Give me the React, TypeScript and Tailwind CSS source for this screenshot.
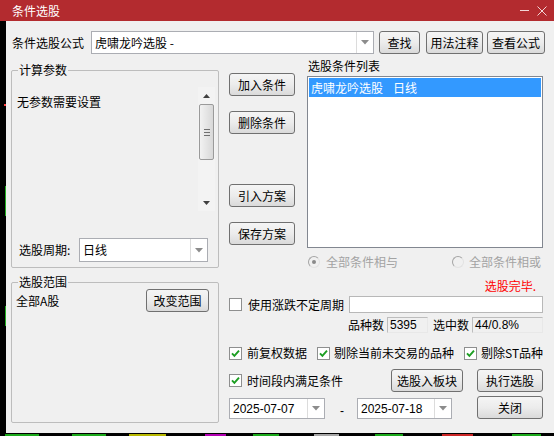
import type { ReactNode } from 'react';

// 下拉小三角
function Arrow() {
  return (
    <svg width="8" height="5" viewBox="0 0 8 5">
      <path d="M0 0 H8 L4 4.5 Z" fill="#8c8c8c" />
    </svg>
  );
}

function Btn({ className, children }: { className: string; children: ReactNode }) {
  return (
    <div
      className={`flex items-center justify-center shrink-0 whitespace-nowrap border border-[#707070] rounded-[3px] bg-linear-to-b from-[#f5f5f5] via-[#ececec] to-[#dadada] text-[12px] leading-none text-black ${className}`}
    >
      {children}
    </div>
  );
}

function Combo({ className, text, mono }: { className: string; text: string; mono?: boolean }) {
  return (
    <div className={`flex shrink-0 border border-[#abadb3] bg-white ${className}`}>
      <div
        className={`flex-1 flex items-center pl-[3px] text-black whitespace-pre ${
          mono ? "font-['Liberation_Sans',sans-serif] text-[12px]" : 'text-[12px]'
        }`}
      >
        {text}
      </div>
      <div className="w-[17px] border-l border-[#dcdcdc] flex items-center justify-center">
        <Arrow />
      </div>
    </div>
  );
}

function Check({ checked }: { checked?: boolean }) {
  return (
    <div className="w-[13px] h-[13px] shrink-0 border border-[#8e8f8f] bg-white flex items-center justify-center">
      {checked && (
        <svg width="9" height="9" viewBox="0 0 9 9">
          <path d="M1 4.3 L3.4 6.8 L8 1.6" stroke="#1c9e22" strokeWidth="1.9" fill="none" />
        </svg>
      )}
    </div>
  );
}

function Radio({ on }: { on?: boolean }) {
  return (
    <div className="w-[12px] h-[12px] shrink-0 rounded-full border border-[#a4a4a4] border-r-[#e2e2e2] border-b-[#e2e2e2] bg-[#f0f0f0] flex items-center justify-center">
      {on && <div className="w-[4px] h-[4px] rounded-full bg-[#8a8a8a]" />}
    </div>
  );
}

function Scrollbar() {
  return (
    <div className="w-[17px] h-[124px] mr-[3px] flex flex-col bg-[#f3f3f3]">
      <div className="h-[17px] flex items-center justify-center">
        <svg width="7" height="4" viewBox="0 0 7 4">
          <path d="M0 4 H7 L3.5 0 Z" fill="#404040" />
        </svg>
      </div>
      <div className="h-[56px] mx-[1px] rounded-[2px] border border-[#9a9a9a] bg-linear-to-r from-[#f2f2f2] to-[#d8d8d8] flex flex-col items-center justify-center gap-[2px]">
        <div className="w-[6px] h-px bg-[#707070]" />
        <div className="w-[6px] h-px bg-[#707070]" />
        <div className="w-[6px] h-px bg-[#707070]" />
      </div>
      <div className="flex-1" />
      <div className="h-[17px] flex items-center justify-center">
        <svg width="7" height="4" viewBox="0 0 7 4">
          <path d="M0 0 H7 L3.5 4 Z" fill="#404040" />
        </svg>
      </div>
    </div>
  );
}

const marks = [
  { w: 'w-[34px]', c: 'bg-[#22d322]', ml: 'ml-[5px]' },
  { w: 'w-[34px]', c: 'bg-[#22d322]', ml: 'ml-[33px]' },
  { w: 'w-[37px]', c: 'bg-[#e6e600]', ml: 'ml-[23px]' },
  { w: 'w-[21px]', c: 'bg-[#e000e0]', ml: 'ml-[39px]' },
  { w: 'w-[26px]', c: 'bg-[#22d322]', ml: 'ml-[27px]' },
  { w: 'w-[25px]', c: 'bg-[#d0d0d0]', ml: 'ml-[35px]' },
  { w: 'w-[28px]', c: 'bg-[#22d322]', ml: 'ml-[36px]' },
  { w: 'w-[31px]', c: 'bg-[#ff3030]', ml: 'ml-[39px]' },
  { w: 'w-[29px]', c: 'bg-[#22d322]', ml: 'ml-[39px]' },
];

export default function App() {
  return (
    <div className="w-[554px] h-[436px] bg-black flex flex-col overflow-hidden font-['Noto_Sans_CJK_SC',sans-serif] text-[12px] text-black select-none">
      {/* 标题栏 */}
      <div className="h-[21px] shrink-0 bg-[#b32b2f] flex items-center pl-[12px] pr-[7px]">
        <span className="text-white text-[12px] leading-none">条件选股</span>
        <div className="ml-auto flex items-center gap-[8px]">
          <svg width="9" height="2" viewBox="0 0 9 2">
            <rect width="9" height="1" fill="#f2d6d6" />
          </svg>
          <svg width="10" height="10" viewBox="0 0 10 10">
            <path d="M0.5 0.5 L9.5 9.5 M9.5 0.5 L0.5 9.5" stroke="#f2d6d6" strokeWidth="1" />
          </svg>
        </div>
      </div>

      <div className="h-[412px] shrink-0 flex">
        {/* 左侧黑边 */}
        <div className="w-[6px] shrink-0 flex flex-col">
          <div className="mt-[83px] ml-[4px] w-[2px] h-[2px] bg-[#ff4040]" />
          <div className="mt-[80px] ml-[5px] w-px h-[30px] bg-[#22b022]" />
          <div className="mt-[90px] ml-[5px] w-px h-[20px] bg-[#22b022]" />
        </div>

        {/* 窗体 */}
        <div className="flex-1 bg-[#f0f0f0] flex flex-col">
          {/* 公式行 */}
          <div className="mt-[10px] ml-[6px] h-[23px] flex items-center">
            <span className="w-[79px] shrink-0 leading-none whitespace-nowrap">条件选股公式</span>
            <Combo className="w-[283px] h-[23px]" text="虎啸龙吟选股 -" />
            <Btn className="ml-[5px] w-[41px] h-[23px]">查找</Btn>
            <Btn className="ml-[6px] w-[57px] h-[23px]">用法注释</Btn>
            <Btn className="ml-[4px] w-[58px] h-[23px]">查看公式</Btn>
          </div>

          <div className="mt-[8px] ml-[5px] flex">
            {/* 左列 */}
            <div className="w-[208px] shrink-0 flex flex-col">
              <fieldset className="h-[206px] border border-[#bdbdbd] rounded-[2px]">
                <legend className="ml-[6px] px-[1px] leading-[16px]">计算参数</legend>
                <div className="mt-[9px] h-[124px] flex">
                  <div className="flex-1 pl-[5px] pt-[7px] leading-[16px]">无参数需要设置</div>
                  <Scrollbar />
                </div>
                <div className="mt-[27px] pl-[7px] h-[24px] flex items-center">
                  <span className="w-[60px] shrink-0 leading-none whitespace-nowrap">选股周期:</span>
                  <Combo className="w-[129px] h-[24px]" text="日线" />
                </div>
              </fieldset>

              <fieldset className="mt-[6px] h-[149px] border border-[#bdbdbd] rounded-[2px]">
                <legend className="ml-[6px] px-[1px] leading-[16px]">选股范围</legend>
                <div className="-mt-[1px] h-[23px] pl-[4px] pr-[9px] flex items-center justify-between">
                  <span className="leading-none">全部A股</span>
                  <Btn className="w-[63px] h-[23px]">改变范围</Btn>
                </div>
              </fieldset>
            </div>

            {/* 右侧 */}
            <div className="ml-[10px] w-[314px] flex flex-col">
              <div className="h-[186px] flex">
                <div className="w-[66px] shrink-0 pt-[11px] flex flex-col">
                  <Btn className="w-[66px] h-[23px]">加入条件</Btn>
                  <Btn className="mt-[15px] w-[66px] h-[23px]">删除条件</Btn>
                  <Btn className="mt-[50px] w-[66px] h-[23px]">引入方案</Btn>
                  <Btn className="mt-[15px] w-[66px] h-[23px]">保存方案</Btn>
                </div>
                <div className="ml-[12px] w-[236px] flex flex-col">
                  <div className="-mt-[4px] pl-[1px] leading-[16px]">选股条件列表</div>
                  <div className="mt-[2px] h-[172px] border border-[#828790] bg-white p-px">
                    <div className="h-[19px] bg-[#3399ff] text-white pl-[2px] flex items-center leading-none">
                      <span>虎啸龙吟选股</span>
                      <span className="ml-[10px]">日线</span>
                    </div>
                  </div>
                </div>
              </div>

              <div className="mt-[6px] h-[16px] pl-[79px] flex items-center text-[#a3a3a3] whitespace-nowrap">
                <Radio on />
                <span className="ml-[6px] leading-none">全部条件相与</span>
                <div className="ml-[54px]">
                  <Radio />
                </div>
                <span className="ml-[5px] leading-none">全部条件相或</span>
              </div>

              <div className="mt-[8px] pr-[7px] leading-[16px] text-right text-[#ff0000]">选股完毕.</div>

              <div className="mt-[2px] h-[17px] flex items-center whitespace-nowrap">
                <Check />
                <span className="ml-[6px] leading-none">使用涨跌不定周期</span>
                <div className="ml-[5px] w-[194px] h-[17px] shrink-0 border border-[#b8b8b8] bg-white" />
              </div>

              <div className="mt-[4px] h-[16px] pl-[119px] flex items-center whitespace-nowrap">
                <span className="w-[39px] shrink-0 leading-none">品种数</span>
                <div className="w-[41px] h-[16px] shrink-0 border border-[#bdbdbd] border-r-[#e8e8e8] border-b-[#e8e8e8] pl-[2px] flex items-center font-['Liberation_Sans',sans-serif] text-[12px]">
                  5395
                </div>
                <span className="ml-[5px] w-[39px] shrink-0 leading-none">选中数</span>
                <div className="w-[71px] h-[16px] shrink-0 border border-[#bdbdbd] border-r-[#e8e8e8] border-b-[#e8e8e8] pl-[2px] flex items-center font-['Liberation_Sans',sans-serif] text-[12px]">
                  44/0.8%
                </div>
              </div>

              <div className="mt-[12px] h-[16px] flex items-center whitespace-nowrap">
                <Check checked />
                <span className="ml-[5px] shrink-0 leading-none">前复权数据</span>
                <div className="ml-[10px] shrink-0">
                  <Check checked />
                </div>
                <span className="ml-[4px] shrink-0 leading-none">剔除当前未交易的品种</span>
                <div className="ml-[10px] shrink-0">
                  <Check checked />
                </div>
                <span className="ml-[4px] shrink-0 leading-none">剔除ST品种</span>
              </div>

              <div className="mt-[8px] h-[23px] flex items-center whitespace-nowrap">
                <Check checked />
                <span className="ml-[5px] w-[96px] shrink-0 leading-none">时间段内满足条件</span>
                <Btn className="ml-[48px] w-[72px] h-[23px]">选股入板块</Btn>
                <Btn className="ml-[14px] w-[66px] h-[23px]">执行选股</Btn>
              </div>

              <div className="mt-[4px] h-[23px] flex items-end">
                <Combo className="w-[96px] h-[21px]" text="2025-07-07" mono />
                <span className="ml-[15px] w-[17px] mb-[2px] font-['Liberation_Sans',sans-serif] leading-none">-</span>
                <Combo className="w-[95px] h-[21px]" text="2025-07-18" mono />
                <Btn className="ml-[25px] w-[66px] h-[23px]">关闭</Btn>
              </div>
            </div>
          </div>
        </div>
      </div>

      {/* 底部黑边 */}
      <div className="h-[3px] shrink-0 flex items-end">
        {marks.map((m, i) => (
          <div key={i} className={`h-[2px] ${m.w} ${m.c} ${m.ml} opacity-80`} />
        ))}
      </div>
    </div>
  );
}
